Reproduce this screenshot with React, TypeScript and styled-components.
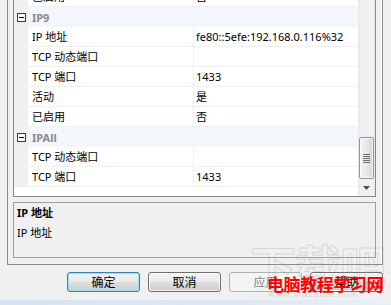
import React from 'react';
import styled, { createGlobalStyle } from 'styled-components';

const GlobalStyle = createGlobalStyle`
  html, body {
    margin: 0;
    padding: 0;
  }
  body {
    background: #f0f0f0;
    font-family: "Noto Sans", "Noto Sans CJK SC", sans-serif;
    font-size: 11px;
    color: #000;
  }
`;

const Dialog = styled.div`
  position: relative;
  width: 391px;
  height: 305px;
  overflow: hidden;
  background: #f0f0f0;
  display: flex;
  flex-direction: column;
`;

const TabPage = styled.div`
  margin: 0 8px 0 7px;
  padding: 0 6px 6px 5px;
  border: 1px solid #898c95;
  border-top: none;
  box-shadow: inset -1px 0 0 #ffffff;
`;

const Grid = styled.div`
  display: flex;
  height: 196px;
  border: 1px solid #828790;
  border-top: none;
  background: #ffffff;
`;

const List = styled.div`
  flex: 1;
  overflow: hidden;
`;

const Rows = styled.div`
  margin-top: -13px;
`;

const Row = styled.div`
  display: grid;
  grid-template-columns: 14px 165px 1fr;
  height: 20px;
`;

const Gutter = styled.div`
  background: #f0f0f0;
  display: flex;
  align-items: center;
  justify-content: center;
`;

const Cell = styled.div<{ $value?: boolean }>`
  display: flex;
  align-items: center;
  padding-left: ${p => (p.$value ? '2px' : '4px')};
  border-bottom: 1px solid #f0f0f0;
  border-left: ${p => (p.$value ? '1px solid #f0f0f0' : 'none')};
  white-space: nowrap;
  overflow: hidden;
  line-height: 19px;
`;

const CategoryCell = styled.div`
  grid-column: 2 / 4;
  display: flex;
  align-items: center;
  padding-left: 4px;
  background: #f3f6fb;
  color: #8a8a8a;
  font-weight: bold;
`;

const Toggle = styled.span`
  box-sizing: border-box;
  width: 9px;
  height: 9px;
  border: 1px solid #3a3a3a;
  background: #ffffff;
  display: flex;
  align-items: center;
  justify-content: center;
  &::after {
    content: '';
    width: 5px;
    height: 1px;
    background: #000;
  }
`;

const Scrollbar = styled.div`
  width: 17px;
  display: flex;
  flex-direction: column;
  background: linear-gradient(90deg, #e3e3e3 0px, #f0f0f0 2px, #f0f0f0 15px, #e8e8e8 17px);
`;

const Track = styled.div`
  flex: 1;
  display: flex;
  flex-direction: column;
  justify-content: flex-end;
  padding: 0 1px;
`;

const Thumb = styled.div`
  height: 40px;
  border: 1px solid #959595;
  border-radius: 2px;
  background: linear-gradient(90deg, #f4f4f4 0%, #e8e8e8 50%, #d6d6d6 100%);
  box-shadow: inset 0 0 0 1px rgba(255, 255, 255, 0.7);
  display: flex;
  align-items: center;
  justify-content: center;
`;

const ArrowButton = styled.div`
  height: 17px;
  display: flex;
  align-items: center;
  justify-content: center;
`;

const Description = styled.div`
  margin-top: 5px;
  height: 48px;
  padding: 3px 3px;
  border: 1px solid #a0a0a0;
  background: #f0f0f0;
  line-height: 14px;
`;

const DescTitle = styled.div`
  font-weight: bold;
`;

const DescText = styled.div`
  margin-top: 6px;
`;

const ButtonRow = styled.div`
  display: flex;
  justify-content: flex-end;
  gap: 8px;
  margin-top: 7px;
  padding-right: 8px;
`;

const Button = styled.button<{ $primary?: boolean }>`
  width: 73px;
  height: 20px;
  padding: 0;
  border: 1px solid ${p => (p.$primary ? '#3c7fb1' : '#707070')};
  border-radius: 3px;
  background: linear-gradient(#f2f2f2 0%, #ebebeb 48%, #dddddd 52%, #cfcfcf 100%);
  box-shadow: inset 0 0 0 1px ${p => (p.$primary ? '#9ddcf7' : 'rgba(255, 255, 255, 0.75)')};
  font-family: "Noto Sans", "Noto Sans CJK SC", sans-serif;
  font-size: 12px;
  color: #000;

  &:disabled {
    border-color: #adb2b5;
    background: #f4f4f4;
    box-shadow: none;
    color: #838383;
  }
`;

const Spacer = styled.div`
  flex: 1;
`;

const FrameEdge = styled.div`
  height: 5px;
  background: linear-gradient(90deg, #d6e3f2 0%, #dde8f4 60%, #e9eff7 100%);
`;

const Watermark = styled.div`
  position: absolute;
  left: 250px;
  top: 236px;
  font-family: "Noto Sans CJK SC", sans-serif;
  font-size: 46px;
  font-weight: bold;
  line-height: 56px;
  color: transparent;
  -webkit-text-stroke: 1px rgba(120, 120, 120, 0.22);
  letter-spacing: -1px;
  pointer-events: none;
`;

const SiteUrl = styled.div`
  position: absolute;
  left: 268px;
  top: 289px;
  font-family: "Liberation Sans", sans-serif;
  font-size: 9px;
  letter-spacing: 1px;
  color: rgba(150, 150, 150, 0.35);
  pointer-events: none;
`;

const Stamp = styled.div`
  position: absolute;
  left: 267px;
  top: 273px;
  font-family: "Noto Sans CJK SC", sans-serif;
  font-size: 17px;
  font-weight: bold;
  line-height: 22px;
  color: #ff0000;
  letter-spacing: -0.4px;
  pointer-events: none;
`;

type Item =
  | { kind: 'category'; name: string }
  | { kind: 'prop'; name: string; value?: string };

const items: Item[] = [
  { kind: 'prop', name: '已启用', value: '否' },
  { kind: 'category', name: 'IP9' },
  { kind: 'prop', name: 'IP 地址', value: 'fe80::5efe:192.168.0.116%32' },
  { kind: 'prop', name: 'TCP 动态端口', value: '' },
  { kind: 'prop', name: 'TCP 端口', value: '1433' },
  { kind: 'prop', name: '活动', value: '是' },
  { kind: 'prop', name: '已启用', value: '否' },
  { kind: 'category', name: 'IPAll' },
  { kind: 'prop', name: 'TCP 动态端口', value: '' },
  { kind: 'prop', name: 'TCP 端口', value: '1433' },
];

const Grip = () => (
  <svg width="7" height="9" viewBox="0 0 7 9">
    {[0, 2, 4, 6, 8].map(y => (
      <rect key={y} x="0" y={y} width="7" height="1" fill="#6e6e6e" />
    ))}
  </svg>
);

const DownArrow = () => (
  <svg width="7" height="4" viewBox="0 0 7 4">
    <path d="M0 0h7L3.5 4z" fill="#4d4d4d" />
  </svg>
);

export default function App() {
  return (
    <>
      <GlobalStyle />
      <Dialog>
        <TabPage>
          <Grid>
            <List>
              <Rows>
                {items.map((item, i) =>
                  item.kind === 'category' ? (
                    <Row key={i}>
                      <Gutter>
                        <Toggle />
                      </Gutter>
                      <CategoryCell>{item.name}</CategoryCell>
                    </Row>
                  ) : (
                    <Row key={i}>
                      <Gutter />
                      <Cell>{item.name}</Cell>
                      <Cell $value>{item.value}</Cell>
                    </Row>
                  )
                )}
              </Rows>
            </List>
            <Scrollbar>
              <Track>
                <Thumb>
                  <Grip />
                </Thumb>
              </Track>
              <ArrowButton>
                <DownArrow />
              </ArrowButton>
            </Scrollbar>
          </Grid>
          <Description>
            <DescTitle>IP 地址</DescTitle>
            <DescText>IP 地址</DescText>
          </Description>
        </TabPage>
        <ButtonRow>
          <Button $primary>确定</Button>
          <Button>取消</Button>
          <Button disabled>应用</Button>
          <Button>帮助</Button>
        </ButtonRow>
        <Spacer />
        <FrameEdge />
        <Watermark>下载吧</Watermark>
        <SiteUrl>www.xiazaiba.com</SiteUrl>
        <Stamp>电脑教程学习网</Stamp>
      </Dialog>
    </>
  );
}
